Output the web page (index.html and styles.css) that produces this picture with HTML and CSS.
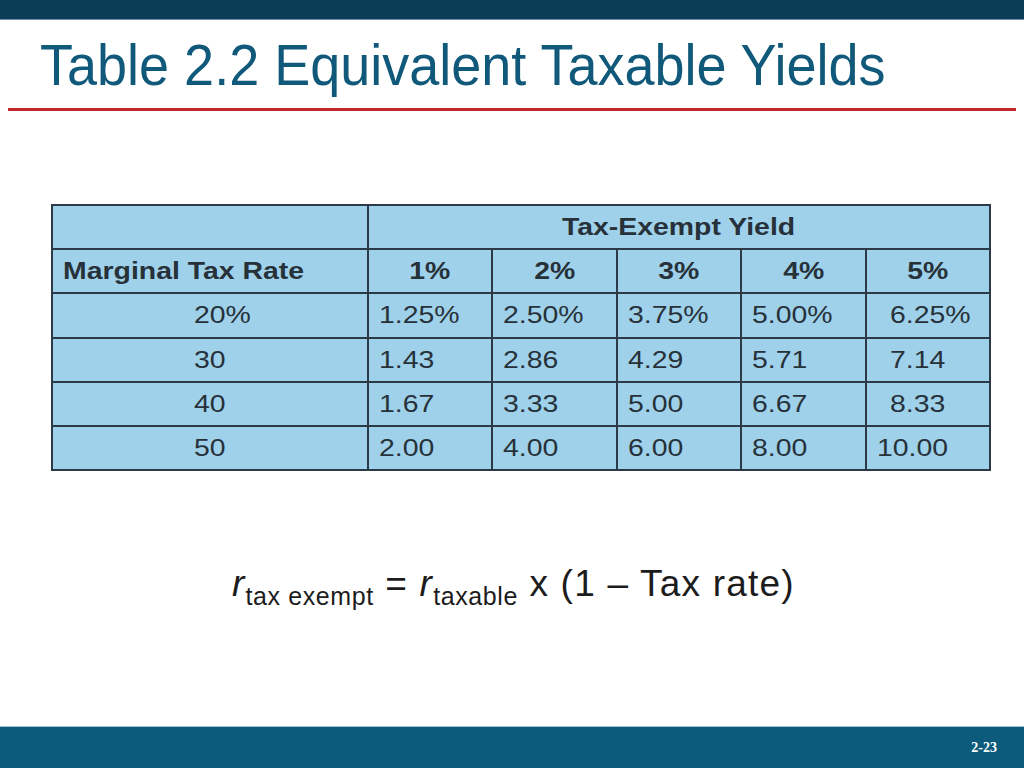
FILE: index.html
```html
<!DOCTYPE html>
<html>
<head>
<meta charset="utf-8">
<link rel="stylesheet" href="styles.css">
</head>
<body>
<div class="slide">
  <div class="topbar"></div>
  <h1 class="title">Table 2.2 Equivalent Taxable Yields</h1>
  <div class="rule"></div>
  <main class="content">
    <table class="yields">
      <colgroup>
        <col class="c-first">
        <col class="c-num">
        <col class="c-num">
        <col class="c-num">
        <col class="c-num">
        <col class="c-num">
      </colgroup>
      <tr class="head">
        <td></td>
        <td colspan="5" class="center"><span>Tax-Exempt Yield</span></td>
      </tr>
      <tr class="head">
        <td class="label"><span>Marginal Tax Rate</span></td>
        <td class="center"><span>1%</span></td>
        <td class="center"><span>2%</span></td>
        <td class="center"><span>3%</span></td>
        <td class="center"><span>4%</span></td>
        <td class="center"><span>5%</span></td>
      </tr>
      <tr>
        <td class="rate"><span>20%</span></td>
        <td><span>1.25%</span></td><td><span>2.50%</span></td><td><span>3.75%</span></td><td><span>5.00%</span></td><td class="last"><span>6.25%</span></td>
      </tr>
      <tr>
        <td class="rate"><span>30</span></td>
        <td><span>1.43</span></td><td><span>2.86</span></td><td><span>4.29</span></td><td><span>5.71</span></td><td class="last"><span>7.14</span></td>
      </tr>
      <tr>
        <td class="rate"><span>40</span></td>
        <td><span>1.67</span></td><td><span>3.33</span></td><td><span>5.00</span></td><td><span>6.67</span></td><td class="last"><span>8.33</span></td>
      </tr>
      <tr>
        <td class="rate"><span>50</span></td>
        <td><span>2.00</span></td><td><span>4.00</span></td><td><span>6.00</span></td><td><span>8.00</span></td><td><span>10.00</span></td>
      </tr>
    </table>
    <p class="formula"><i>r</i><sub>tax exempt</sub> = <i>r</i><sub>taxable</sub> x (1 – Tax rate)</p>
  </main>
  <footer class="footer"><span class="page">2-23</span></footer>
</div>
</body>
</html>
```
FILE: styles.css
```css
html, body {
  margin: 0;
  padding: 0;
  background: #ffffff;
}
.slide {
  width: 1024px;
  height: 768px;
  display: flex;
  flex-direction: column;
  font-family: "Liberation Sans", Arial, sans-serif;
  color: #1f2a33;
  overflow: hidden;
}
.topbar {
  flex: none;
  height: 19px;
  background: #0b3d56;
  border-bottom: 1px solid #6f8fa3;
}
.title {
  flex: none;
  margin: 0;
  padding: 13px 0 0 43px;
  height: 75px;
  box-sizing: border-box;
  font-family: "Liberation Sans", Arial, sans-serif;
  font-weight: normal;
  font-size: 58px;
  line-height: 64px;
  color: #11597b;
  white-space: nowrap;
  transform: scaleX(0.931);
  transform-origin: 0 0;
}
.rule {
  flex: none;
  margin: 13px 8px 0 8px;
  height: 3px;
  background: #c1272d;
}
.content {
  flex: 1;
  display: flex;
  flex-direction: column;
  align-items: flex-start;
  padding: 93px 0 0 51px;
}
.yields {
  border-collapse: collapse;
  table-layout: fixed;
  width: 938px;
  background: #9fd1ea;
  font-size: 24.5px;
  color: #27313a;
}
.c-first {
  width: 316px;
}
.c-num {
  width: 124.4px;
}
.yields td {
  border: 2px solid #2c3a47;
  height: 42.2px;
  padding: 0 0 0 10px;
  white-space: nowrap;
  overflow: visible;
}
.yields td span {
  display: inline-block;
  transform: scaleX(1.16);
  transform-origin: 0 50%;
}
.yields td.center span {
  transform-origin: 50% 50%;
}
.yields .head td {
  font-weight: bold;
}
.yields td.center {
  text-align: center;
  padding: 0;
}
.yields td.rate {
  padding-left: 141px;
}
.yields td.last {
  padding-left: 23px;
}
.formula {
  margin: 91px 0 0 181px;
  font-size: 37px;
  line-height: 44px;
  letter-spacing: 1.2px;
  color: #1c1c1c;
  white-space: nowrap;
}
.formula i {
  font-style: italic;
}
.formula sub {
  font-size: 25px;
  letter-spacing: 0.6px;
  vertical-align: -9px;
  line-height: 0;
}
.footer {
  flex: none;
  height: 41px;
  background: #0c5a7c;
  border-top: 1px solid #a9c6d6;
  display: flex;
  justify-content: flex-end;
  align-items: center;
  padding-right: 27px;
}
.page {
  font-family: "Liberation Serif", serif;
  font-weight: bold;
  font-size: 14px;
  color: #ffffff;
}
```
